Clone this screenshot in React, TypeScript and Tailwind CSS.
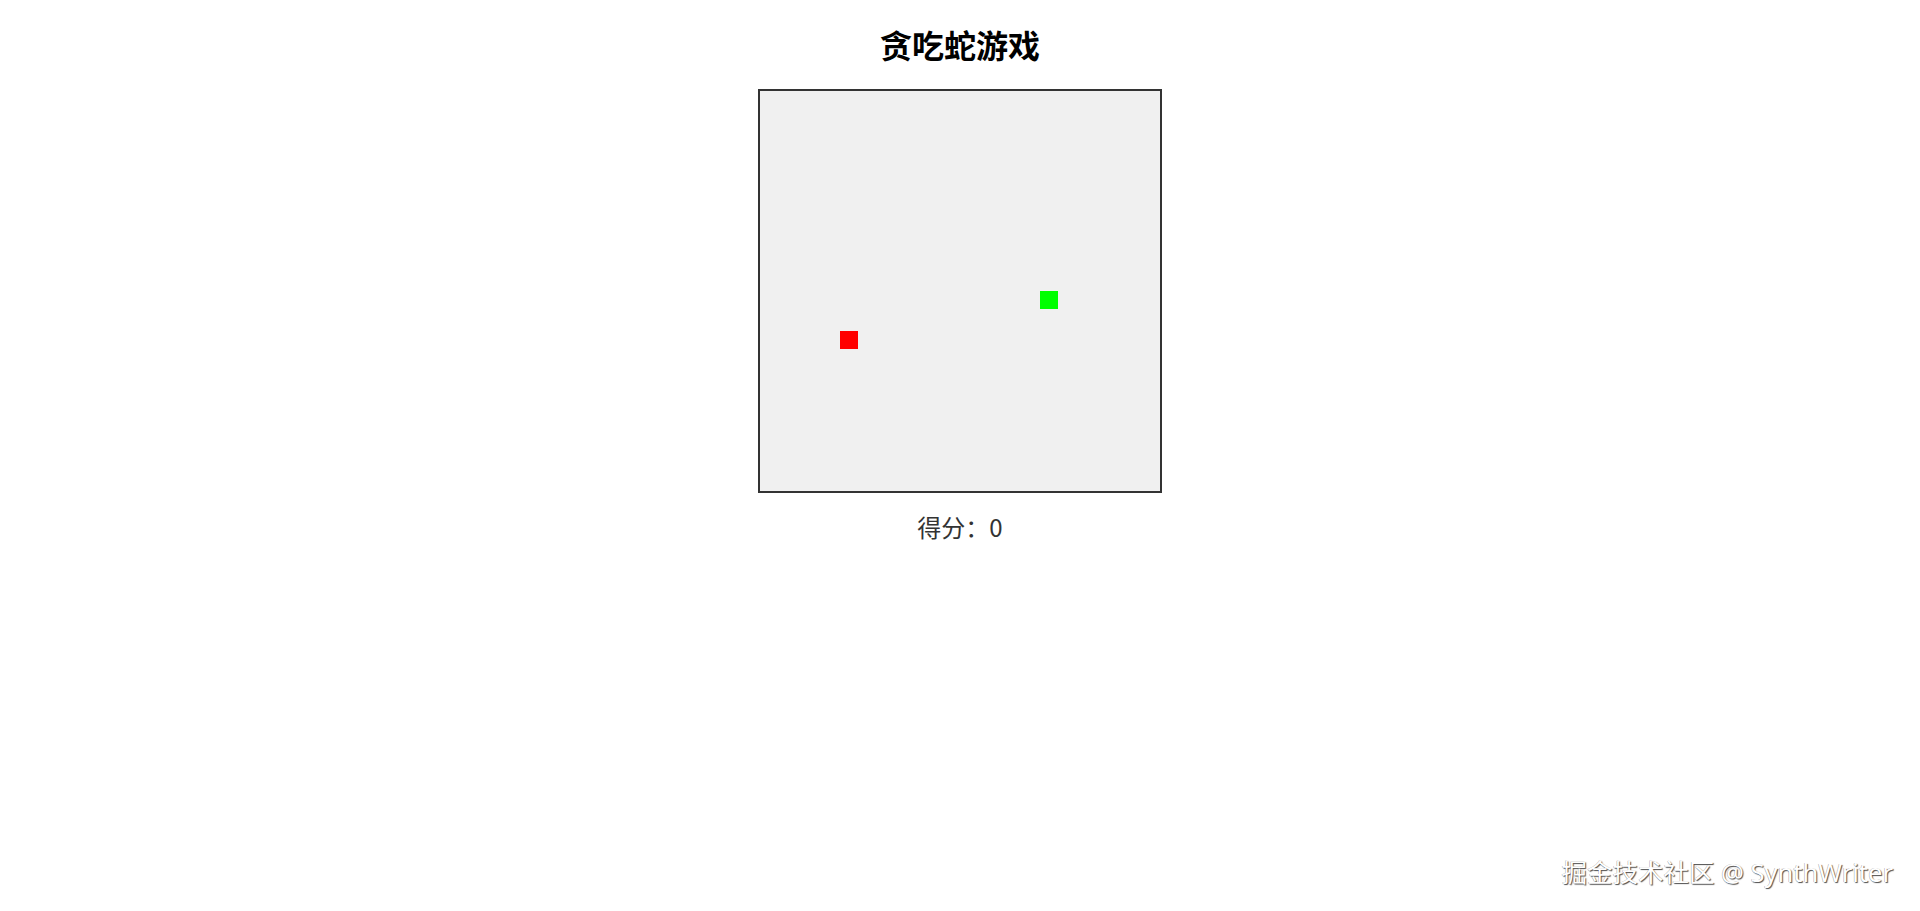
const CELL = 20;

const snake = [{ x: 14, y: 10 }];
const food = { x: 4, y: 12 };

const Block = ({ x, y, color }: { x: number; y: number; color: string }) => (
  <div
    className={`absolute w-[18px] h-[18px] ${color}`}
    style={{ left: x * CELL, top: y * CELL }}
  />
);

const App = () => {
  return (
    <div className="min-h-[911px] bg-white relative font-['Noto_Sans_CJK_SC',sans-serif]">
      <div className="flex flex-col items-center">
        <h1 className="mt-[21px] text-[32px] leading-[46px] font-bold text-black">
          贪吃蛇游戏
        </h1>
        <div className="mt-[22px] border-2 border-[#333] bg-[#f0f0f0]">
          <div className="relative w-[400px] h-[400px]">
            {snake.map((s, i) => (
              <Block key={i} x={s.x} y={s.y} color="bg-[#00ff00]" />
            ))}
            <Block x={food.x} y={food.y} color="bg-[#ff0000]" />
          </div>
        </div>
        <p className="mt-[16px] text-[24px] leading-[35px] text-[#333]">得分：0</p>
      </div>
      <div className="absolute right-[27px] bottom-[21px] font-['Noto_Sans','Noto_Sans_CJK_SC',sans-serif] text-[25.5px] leading-[36px] text-white [text-shadow:1px_1px_1px_rgba(0,0,0,0.7),-0.5px_-0.5px_0.5px_rgba(0,0,0,0.35)]">
        掘金技术社区 @ SynthWriter
      </div>
    </div>
  );
};

export default App;
